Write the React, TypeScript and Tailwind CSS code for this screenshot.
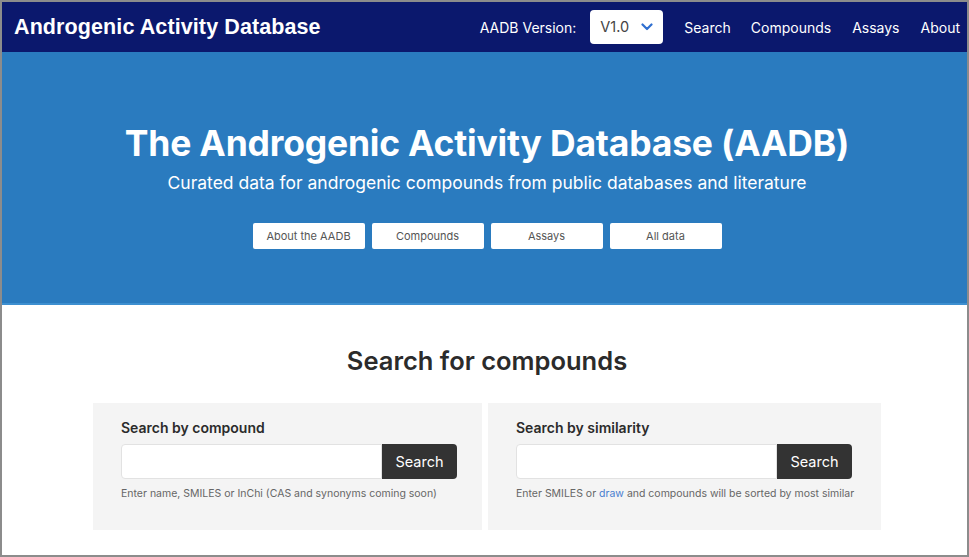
import React from "react";

export default function App() {
  const inter = { fontFamily: "Inter, 'Noto Sans', sans-serif" } as React.CSSProperties;
  return (
    <div className="w-[969px] h-[557px] overflow-hidden bg-white border-2 border-[#8c8c8c] flex flex-col" style={inter}>
      <nav className="h-[50px] shrink-0 bg-[#0b186d] flex items-center pl-[12px] pr-[7px]">
        <div className="text-white font-bold text-[21.5px] tracking-[0.1px]" style={{ fontFamily: "'Liberation Sans', Arial, sans-serif" }}>
          Androgenic Activity Database
        </div>
        <div className="ml-auto flex items-center text-white text-[14px]">
          <span className="mr-[14px]">AADB Version:</span>
          <div className="w-[73px] h-[34px] bg-white rounded-[4px] flex items-center pl-[10px] text-[#444] text-[14.5px] mr-[21px]">
            <span>V1.0</span>
            <svg className="ml-[12px]" width="12" height="8" viewBox="0 0 12 8" fill="none">
              <path d="M1.5 1.5 L6 6 L10.5 1.5" stroke="#2f6fd0" strokeWidth="2.2" strokeLinecap="round" strokeLinejoin="round" />
            </svg>
          </div>
          <span className="mr-[20px]">Search</span>
          <span className="mr-[21px]">Compounds</span>
          <span className="mr-[21px]">Assays</span>
          <span>About</span>
        </div>
      </nav>
      <section className="h-[253px] shrink-0 bg-[#2a7bbf] border-b-2 border-[#3d8fd0] flex flex-col items-center pt-[70px] pl-[5px]">
        <h1 className="text-white font-bold text-[35.5px] leading-[44px] tracking-[-0.2px]">
          The Androgenic Activity Database (AADB)
        </h1>
        <p className="text-white text-[17.5px] leading-[24px] mt-[5px]">
          Curated data for androgenic compounds from public databases and literature
        </p>
        <div className="flex gap-[7px] mt-[28px]">
          {["About the AADB", "Compounds", "Assays", "All data"].map((t) => (
            <div key={t} className="w-[112px] h-[26px] bg-white rounded-[2px] flex items-center justify-center text-[11px] text-[#555]">
              {t}
            </div>
          ))}
        </div>
      </section>
      <section className="flex-1 flex flex-col items-center pl-[5px]">
        <h2 className="mt-[39px] text-[25.5px] leading-[34px] font-semibold text-[#2b2b2b]">Search for compounds</h2>
        <div className="mt-[25px] flex gap-[6px]">
          <Card title="Search by compound" width="w-[389px]">
            Enter name, SMILES or InChi (CAS and synonyms coming soon)
          </Card>
          <Card title="Search by similarity" width="w-[393px]">
            Enter SMILES or <span className="text-[#4a7fd0]">draw</span> and compounds will be sorted by most similar
          </Card>
        </div>
      </section>
    </div>
  );
}

function Card({ title, width, children }: { title: string; width: string; children: React.ReactNode }) {
  return (
    <div className={`${width} h-[127px] bg-[#f4f4f4] pl-[28px] pt-[15px]`}>
      <div className="text-[14px] font-semibold text-[#2b2b2b] leading-[20px]">{title}</div>
      <div className="flex mt-[6px]">
        <div className="w-[261px] h-[35px] bg-white border border-[#e2e2e2] rounded-l-[4px]" />
        <div className="w-[75px] h-[35px] bg-[#333333] rounded-r-[4px] text-white text-[14.5px] flex items-center justify-center">
          Search
        </div>
      </div>
      <div className="mt-[8px] text-[10.5px] text-[#666] leading-[14px]">{children}</div>
    </div>
  );
}
